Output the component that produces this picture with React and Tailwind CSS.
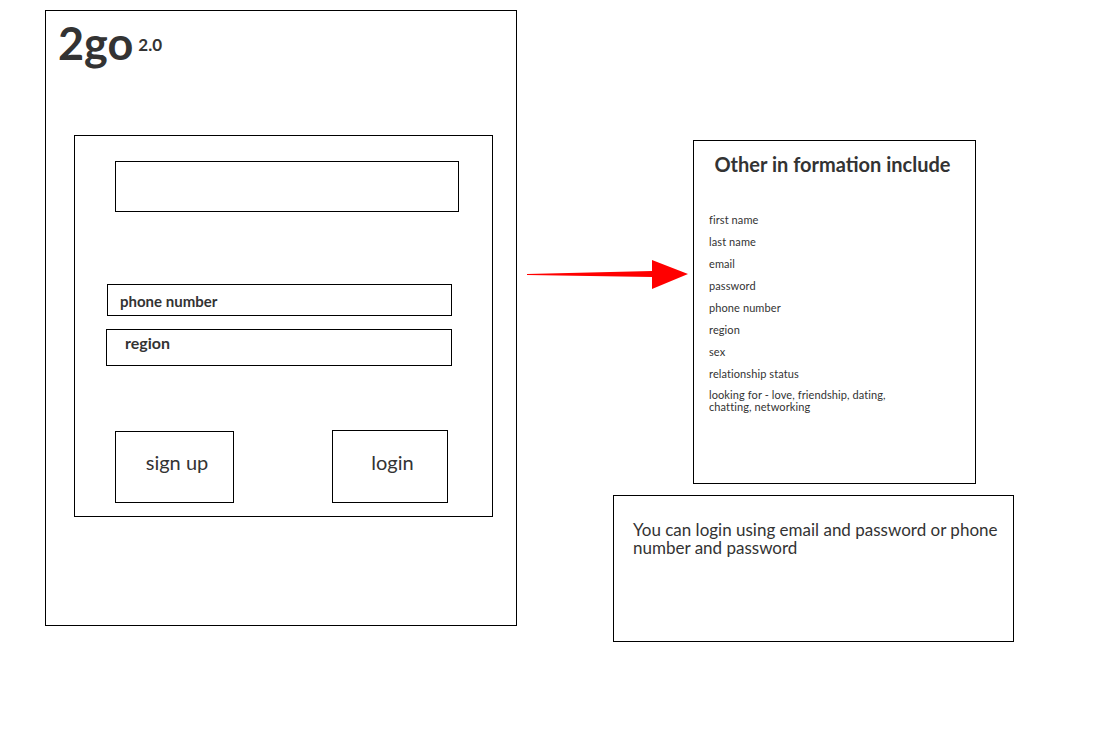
import React from "react";

const fields = [
  "first name",
  "last name",
  "email",
  "password",
  "phone number",
  "region",
  "sex",
  "relationship status",
];

const Arrow = () => (
  <svg width="162" height="34" viewBox="0 0 162 34" className="shrink-0">
    <polygon points="0,16 125,13 125,2 161,16 125,31 125,19 0,17" fill="#ff0000" />
  </svg>
);

const App = () => {
  return (
    <div
      className="w-[1110px] h-[751px] bg-white flex items-start text-[#333333]"
      style={{ fontFamily: "Lato, 'Open Sans', sans-serif" }}
    >
      {/* phone mockup */}
      <div className="ml-[45px] mt-[10px] w-[472px] h-[616px] border border-black shrink-0">
        <div className="h-[124px] pl-[12px] pt-[7px] flex items-start">
          <span className="text-[45px] font-bold leading-[50px]">2go</span>
          <span className="ml-[5px] mt-[17px] text-[17px] font-bold leading-[20px]">2.0</span>
        </div>

        <div className="ml-[28px] w-[419px] h-[382px] border border-black">
          <div className="ml-[40px] mt-[25px] w-[344px] h-[51px] border border-black" />

          <div className="ml-[32px] mt-[72px] w-[345px] h-[32px] border border-black flex items-center pl-[12px] pt-[2px]">
            <span className="text-[15px] font-bold">phone number</span>
          </div>

          <div className="ml-[31px] mt-[13px] w-[346px] h-[37px] border border-black flex items-start pl-[18px] pt-[1px]">
            <span className="text-[16px] font-bold">region</span>
          </div>

          <div className="flex items-start mt-[64px]">
            <div className="ml-[40px] mt-[1px] w-[119px] h-[72px] border border-black flex items-center justify-center pl-[5px] pb-[10px]">
              <span className="text-[20px]">sign up</span>
            </div>
            <div className="ml-[98px] w-[116px] h-[73px] border border-black flex items-center justify-center pl-[5px] pb-[10px]">
              <span className="text-[20px]">login</span>
            </div>
          </div>
        </div>
      </div>

      {/* notes */}
      <div className="ml-[10px] mt-[140px] flex flex-col items-start">
        <div className="flex items-start">
          <div className="mt-[118px]">
            <Arrow />
          </div>
          <div className="ml-[4px] w-[283px] h-[344px] border border-black">
            <div className="pt-[10px] pr-[4px] text-center text-[20px] font-bold leading-[26px]">
              Other in formation include
            </div>
            <ul className="mt-[36px] pl-[15px] text-[11px] leading-[14px] tracking-[0.1px] flex flex-col gap-[8px]">
              {fields.map((f) => (
                <li key={f}>{f}</li>
              ))}
              <li className="leading-[12px]">
                looking for - love, friendship, dating,
                <br />
                chatting, networking
              </li>
            </ul>
          </div>
        </div>

        <div className="ml-[86px] mt-[11px] w-[401px] h-[147px] border border-black pl-[19px] pt-[25px] pr-[6px]">
          <p className="text-[17px] leading-[18px]">
            You can login using email and password or phone number and password
          </p>
        </div>
      </div>
    </div>
  );
};

export default App;
